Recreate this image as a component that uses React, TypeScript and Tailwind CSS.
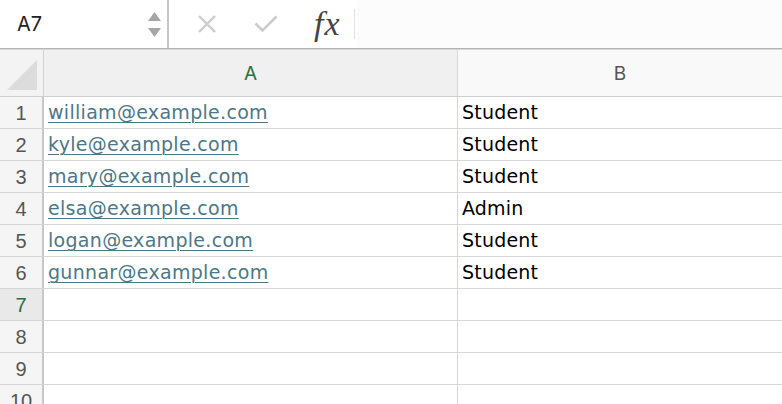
import React from "react";

const rows = [
  { email: "william@example.com", role: "Student" },
  { email: "kyle@example.com", role: "Student" },
  { email: "mary@example.com", role: "Student" },
  { email: "elsa@example.com", role: "Admin" },
  { email: "logan@example.com", role: "Student" },
  { email: "gunnar@example.com", role: "Student" },
  { email: "", role: "" },
  { email: "", role: "" },
  { email: "", role: "" },
  { email: "", role: "" },
];

function FormulaBar() {
  return (
    <div className="flex h-[48px] bg-white">
      {/* Name box */}
      <div className="flex w-[167px] items-center justify-between pl-[17px] pr-[6px]">
        <span className="text-[20px] text-[#222]">A7</span>
        <div className="flex flex-col items-center gap-[7px]">
          <svg width="13" height="9" viewBox="0 0 13 9">
            <path d="M6.5 0 L13 9 L0 9 Z" fill="#a6a6a6" />
          </svg>
          <svg width="13" height="9" viewBox="0 0 13 9">
            <path d="M0 0 L13 0 L6.5 9 Z" fill="#a6a6a6" />
          </svg>
        </div>
      </div>
      <div className="w-[2px] bg-[#c4c4c4]" />

      {/* Cancel / enter / fx */}
      <div className="flex items-center">
        <div className="ml-[27px] flex h-[22px] w-[22px] items-center justify-center">
          <svg width="20" height="20" viewBox="0 0 20 20">
            <path d="M2 2 L18 18 M18 2 L2 18" stroke="#cccccc" strokeWidth="2.4" />
          </svg>
        </div>
        <div className="ml-[36px] flex h-[22px] w-[24px] items-center justify-center">
          <svg width="24" height="18" viewBox="0 0 24 18">
            <path d="M1.5 8.5 L8.5 15.5 L22.5 1.5" stroke="#cccccc" strokeWidth="2.6" fill="none" />
          </svg>
        </div>
        <span className="ml-[36px] font-['Liberation_Serif',serif] text-[34px] italic leading-none tracking-[1px] text-[#444]">
          fx
        </span>
        <div className="ml-[13px] h-[30px] w-px bg-[#e2e2e2]" />
      </div>

      {/* Formula input */}
      <div className="ml-[2px] flex-1 bg-[#fcfcfc]" />
    </div>
  );
}

export default function App() {
  return (
    <div className="h-[404px] w-[782px] overflow-hidden bg-white font-['Inter',sans-serif]">
      <FormulaBar />
      <div className="h-px bg-[#b5b5b5]" />
      <div className="h-px bg-[#d6d6d6]" />

      {/* Column headers */}
      <div className="grid h-[47px] grid-cols-[44px_414px_1fr] border-b border-[#cfcfcf]">
        <div className="relative border-r border-[#d0d0d0] bg-[#f3f3f3]">
          <svg className="absolute bottom-[6px] right-[6px]" width="30" height="30" viewBox="0 0 30 30">
            <path d="M30 0 L30 30 L0 30 Z" fill="#dcdcdc" />
          </svg>
        </div>
        <div className="flex items-center justify-center border-r border-[#d8d8d8] bg-[#f0f0f0] pt-[3px] text-[19px] text-[#2c6e3f]">
          A
        </div>
        <div className="flex items-center justify-center bg-[#f9f9f9] pt-[3px] text-[19px] text-[#555]">
          B
        </div>
      </div>

      {/* Data rows */}
      {rows.map((r, i) => {
        const selected = i === 6;
        return (
          <div
            key={i}
            className="grid h-[32px] grid-cols-[44px_414px_1fr] border-b border-[#d6d6d6]"
          >
            <div
              className={
                selected
                  ? "flex items-center justify-center border-r-2 border-[#c8c8c8] bg-[#e9e9e9] font-['Liberation_Sans',sans-serif] text-[20px] text-[#2c6e3f]"
                  : "flex items-center justify-center border-r-2 border-[#c8c8c8] bg-[#f5f5f5] font-['Liberation_Sans',sans-serif] text-[20px] text-[#555]"
              }
            >
              {i + 1}
            </div>
            <div className="flex items-center border-r border-[#d6d6d6] pl-[4px] font-['DejaVu_Sans',sans-serif] text-[19px] tracking-[0.3px] text-[#4d7785] underline decoration-1 underline-offset-[3px]">
              {r.email}
            </div>
            <div className="flex items-center pl-[4px] font-['DejaVu_Sans',sans-serif] text-[19px] tracking-[0.2px] text-black">
              {r.role}
            </div>
          </div>
        );
      })}
    </div>
  );
}
